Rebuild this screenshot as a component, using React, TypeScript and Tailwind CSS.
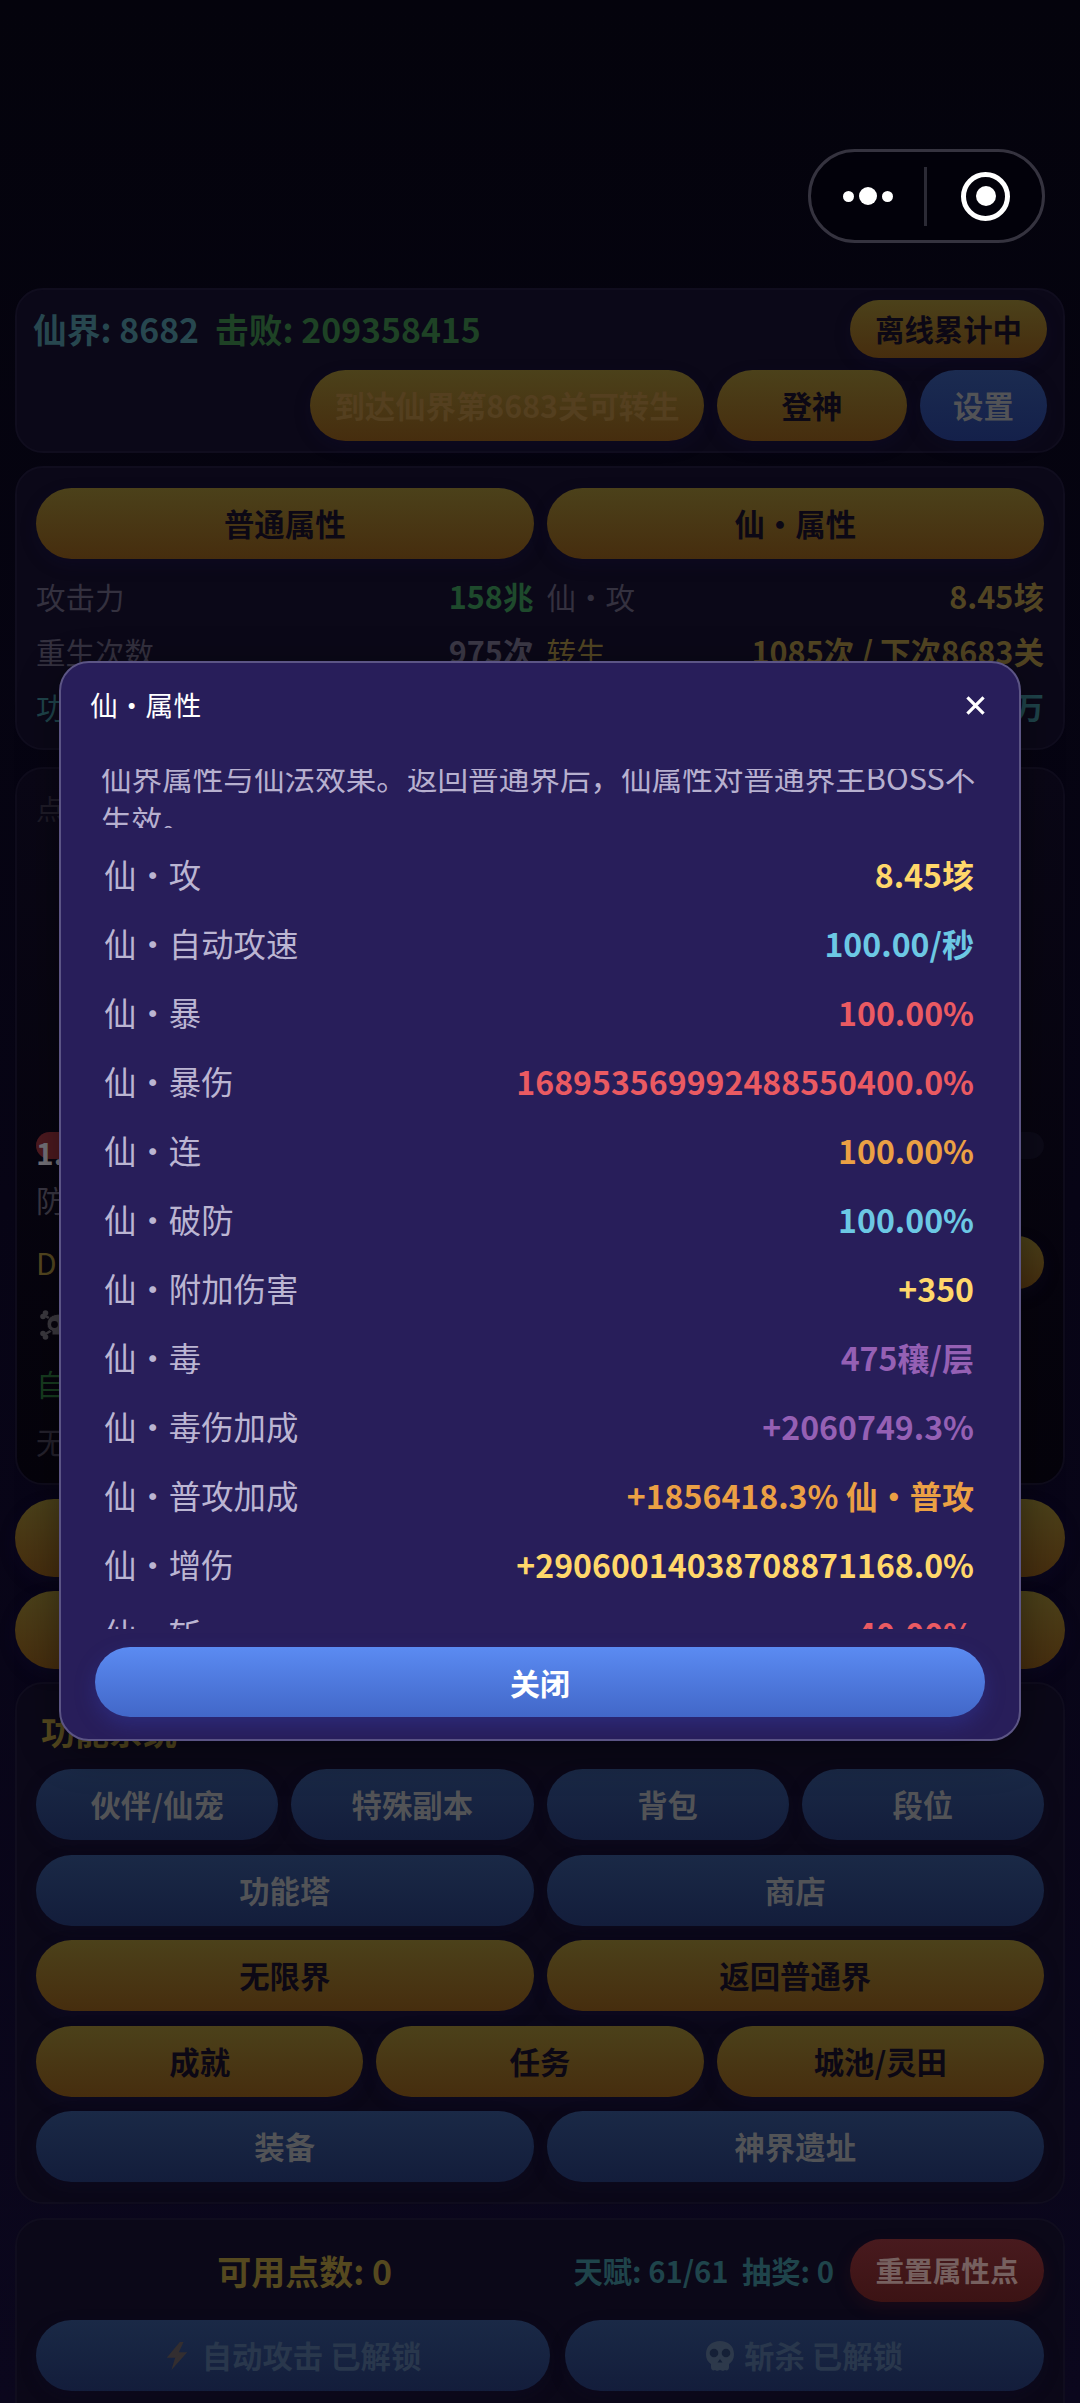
import type { ReactNode } from "react";

type Tone = "gold" | "blue";

const tones: Record<Tone, string> = {
  gold: "bg-linear-to-b from-[#4b411a] to-[#462d0e] text-[#0c0815] shadow-[0_6px_16px_rgba(18,16,56,0.25)]",
  blue: "bg-linear-to-b from-[#1a2946] to-[#131d3b] text-[#525356] shadow-[0_6px_16px_rgba(14,14,44,0.25)]",
};

function Pill({ tone, className = "", children }: { tone: Tone; className?: string; children?: ReactNode }) {
  return (
    <button className={`flex h-[71px] items-center justify-center rounded-full text-[30.4px] leading-none font-bold whitespace-pre ${tones[tone]} ${className}`}>
      {children}
    </button>
  );
}

const card = "mx-[15px] rounded-[28px] border-2 border-[#100d1e] bg-[#0b0818]";

const menuRows: { tone: Tone; cols: string; items: string[] }[] = [
  { tone: "blue", cols: "grid-cols-4", items: ["伙伴/仙宠", "特殊副本", "背包", "段位"] },
  { tone: "blue", cols: "grid-cols-2", items: ["功能塔", "商店"] },
  { tone: "gold", cols: "grid-cols-2", items: ["无限界", "返回普通界"] },
  { tone: "gold", cols: "grid-cols-3", items: ["成就", "任务", "城池/灵田"] },
  { tone: "blue", cols: "grid-cols-2", items: ["装备", "神界遗址"] },
];

const stats = [
  { label: "仙・攻", value: "8.45垓", color: "text-[#ffd76a]" },
  { label: "仙・自动攻速", value: "100.00/秒", color: "text-[#6cc8e4]" },
  { label: "仙・暴", value: "100.00%", color: "text-[#ea5a62]" },
  { label: "仙・暴伤", value: "168953569992488550400.0%", color: "text-[#ea5a62]" },
  { label: "仙・连", value: "100.00%", color: "text-[#eba044]" },
  { label: "仙・破防", value: "100.00%", color: "text-[#6cc8e4]" },
  { label: "仙・附加伤害", value: "+350", color: "text-[#ffd76a]" },
  { label: "仙・毒", value: "475穰/层", color: "text-[#9560b4]" },
  { label: "仙・毒伤加成", value: "+2060749.3%", color: "text-[#9560b4]" },
  { label: "仙・普攻加成", value: "+1856418.3% 仙・普攻", color: "text-[#eba044]" },
  { label: "仙・增伤", value: "+29060014038708871168.0%", color: "text-[#ffd76a]" },
  { label: "仙・斩", value: "40.00%", color: "text-[#ea5a62]" },
];

function Capsule() {
  return (
    <div className="mr-[35px] ml-auto flex h-[94px] w-[237px] items-center rounded-full border-3 border-[#35333f] bg-[#02010a]">
      <div className="flex flex-1 items-center justify-center gap-[5px]">
        <span className="size-[11px] rounded-full bg-white" />
        <span className="size-[18px] rounded-full bg-white" />
        <span className="size-[11px] rounded-full bg-white" />
      </div>
      <div className="h-[59px] w-[3px] bg-[#2b2a35]" />
      <div className="flex flex-1 items-center justify-center pl-[2px]">
        <div className="flex size-[49px] items-center justify-center rounded-full border-[5px] border-white">
          <span className="size-[20px] rounded-full bg-white" />
        </div>
      </div>
    </div>
  );
}

function TopCard() {
  return (
    <section className={`${card} mt-[45px] h-[165px] px-[16px] pt-[10px]`}>
      <div className="flex h-[58px] items-center text-[33.8px] leading-none font-bold">
        <span className="text-[#27474f]">仙界: 8682</span>
        <span className="ml-[16px] text-[#1e4225]">击败: 209358415</span>
        <Pill tone="gold" className="ml-auto h-[58px]! w-[197px] text-[29.4px]!">离线累计中</Pill>
      </div>
      <div className="mt-3 flex justify-end gap-[13px]">
        <Pill tone="gold" className="w-[394px] text-[#543f1f]!">到达仙界第8683关可转生</Pill>
        <Pill tone="gold" className="w-[190px]">登神</Pill>
        <Pill tone="blue" className="w-[127px] from-[#1b2b50]! to-[#14204a]!">设置</Pill>
      </div>
    </section>
  );
}

function Pair({ label, value, labelColor, valueColor }: { label: string; value: string; labelColor: string; valueColor: string }) {
  return (
    <div className="flex items-center justify-between">
      <span className={labelColor}>{label}</span>
      <span className={`text-[30.6px] font-bold ${valueColor}`}>{value}</span>
    </div>
  );
}

function AttrCard() {
  return (
    <section className={`${card} mt-[13px] h-[284px] px-[19px] pt-[20px]`}>
      <div className="grid grid-cols-2 gap-x-[13px]">
        <Pill tone="gold">普通属性</Pill>
        <Pill tone="gold">仙・属性</Pill>
      </div>
      <div className="mt-[10px] grid auto-rows-[55px] grid-cols-2 gap-x-[13px] text-[29.5px] leading-none">
        <Pair label="攻击力" value="158兆" labelColor="text-[#34313f]" valueColor="text-[#1e4a2c]" />
        <Pair label="仙・攻" value="8.45垓" labelColor="text-[#34313f]" valueColor="text-[#524522]" />
        <Pair label="重生次数" value="975次" labelColor="text-[#34313f]" valueColor="text-[#3b3846]" />
        <Pair label="转生" value="1085次 / 下次8683关" labelColor="text-[#524522]" valueColor="text-[#524522]" />
        <Pair label="功德" value="12次" labelColor="text-[#1f444b]" valueColor="text-[#1f444b]" />
        <Pair label="仙力" value="36万" labelColor="text-[#1f444b]" valueColor="text-[#1f444b]" />
      </div>
    </section>
  );
}

function BattleCard() {
  return (
    <section className="mx-[15px] mt-[17px] flex h-[718px] flex-col rounded-[28px] border-2 border-[#0f0c1c] bg-linear-to-b from-[#0a0716] to-[#05030b] px-[19px] text-[30px] leading-none">
      <div className="mt-[25px] h-[30px] text-[28px] text-[#1f1c28]">点击</div>
      <div className="mt-[308px] h-[27px] rounded-full bg-[#0c0a18]">
        <div className="h-[27px] w-[60%] rounded-full bg-[#4e1a20] pt-[5px] font-bold text-[#75737a]">1.2</div>
      </div>
      <div className="mt-[25px] text-[#3a3743]">防御</div>
      <div className="mt-[21px] flex h-[54px] items-center justify-between text-[#554820]">
        <span>DPS</span>
        <Pill tone="gold" className="h-[53px]! w-[160px]" />
      </div>
      <div className="mt-[9px] flex h-[54px] items-center pl-[4px]">
        {/* skull and crossbones */}
        <svg viewBox="0 0 40 30" className="h-[30px] w-[40px]" fill="#3c3a40">
          <path d="M4 5 L36 25 M4 25 L36 5" stroke="#3c3a40" strokeWidth="2.6" />
          <circle cx="5.5" cy="3" r="2.8" /><circle cx="3" cy="6.5" r="2.8" />
          <circle cx="5.5" cy="27" r="2.8" /><circle cx="3" cy="23.5" r="2.8" />
          <path d="M20 4c-8 0-13 4-13 10 0 4 2 6 5 7v4h16v-4c3-1 5-3 5-7 0-6-5-10-13-10z" stroke="#08050f" strokeWidth="1" />
          <circle cx="14.5" cy="14.5" r="3.4" fill="#08050f" />
          <circle cx="25.5" cy="14.5" r="3.4" fill="#08050f" />
        </svg>
      </div>
      <div className="mt-[16px] text-[#173d20]">自动</div>
      <div className="mt-[28px] text-[#25222d]">无</div>
    </section>
  );
}

function MenuCard() {
  return (
    <section className={`${card} mt-[13px] h-[522px] px-[19px] pt-[30px]`}>
      <h2 className="ml-[5px] text-[34px] leading-none font-bold text-[#55491f]">功能系统</h2>
      <div className="mt-[21px] flex flex-col gap-[14.5px]">
        {menuRows.map((row, i) => (
          <div key={i} className={`grid gap-x-[13px] ${row.cols}`}>
            {row.items.map((item) => (
              <Pill key={item} tone={row.tone}>{item}</Pill>
            ))}
          </div>
        ))}
      </div>
    </section>
  );
}

function PointsCard() {
  return (
    <section className={`${card} mt-[14px] h-[240px] px-[19px] pt-[19px]`}>
      <div className="flex h-[63px] items-center leading-none font-bold">
        <span className="flex-1 text-center text-[34px] text-[#55491f]">可用点数: 0</span>
        <span className="text-[29.3px] whitespace-pre text-[#1f444b]">天赋: 61/61  抽奖: 0</span>
        <button className="ml-[16px] h-[63px] w-[194px] rounded-full bg-linear-to-b from-[#481a1e] to-[#3c1314] text-[28.6px] font-bold text-[#76605f] shadow-[0_6px_16px_rgba(60,16,24,0.3)]">
          重置属性点
        </button>
      </div>
      <div className="mt-[18px] flex gap-[15px]">
        <Pill tone="blue" className="w-[514px] text-[#29374c]!">
          <svg viewBox="0 0 24 30" className="mr-[13px] h-[28px] w-[24px]" fill="#332e30">
            <path d="M15 0 L1 17 L10 17 L6 30 L23 11 L14 11 L19 0 Z" />
          </svg>
          自动攻击 已解锁
        </Pill>
        <Pill tone="blue" className="flex-1 text-[#29374c]!">
          <svg viewBox="0 0 28 30" className="mr-[10px] h-[30px] w-[28px]" fill="#2d394b">
            <path d="M14 0C6 0 0 5 0 13c0 5 2 8 5 10v3c0 3 2 4 4 3l2 1 3-1 3 1 2-1c2 1 4 0 4-3v-3c3-2 5-5 5-10C28 5 22 0 14 0z" />
            <circle cx="8" cy="12" r="4.3" fill="#152037" />
            <circle cx="20" cy="12" r="4.3" fill="#152037" />
            <path d="M14 18l-2.5 3.5h5z" fill="#152037" />
          </svg>
          斩杀 已解锁
        </Pill>
      </div>
    </section>
  );
}

function StatsDialog() {
  return (
    <div className="absolute inset-0 flex justify-center pt-[661px]">
      <div className="flex h-[1080px] w-[962px] flex-col rounded-[30px] border-2 border-[#5c5585] bg-[#281e5a] shadow-[0_10px_40px_rgba(0,0,0,0.4)]">
        <div className="flex h-[84px] items-center justify-between pr-[34px] pl-[29px] text-[27.8px] leading-none text-white">
          <span>仙・属性</span>
          <svg viewBox="0 0 20 20" className="size-[19px]" stroke="#fff" strokeWidth="3.4">
            <path d="M1.5 1.5 L18.5 18.5 M18.5 1.5 L1.5 18.5" />
          </svg>
        </div>
        <div className="mt-[22px] h-[59px] overflow-hidden pr-[39px] pl-[40px]">
          <p className="-mt-[13px] text-[30.6px] leading-[43px] text-[#b7b0cf]">
            仙界属性与仙法效果。返回普通界后，仙属性对普通界主BOSS不生效。
          </p>
        </div>
        <div className="h-[801px] overflow-hidden pt-[12px] pr-[45px] pl-[43px]">
          {stats.map((s) => (
            <div key={s.label} className="flex h-[69px] items-center justify-between text-[32.4px] leading-none">
              <span className="text-[#bbb5d2]">{s.label}</span>
              <span className={`text-[32.1px] font-bold ${s.color}`}>{s.value}</span>
            </div>
          ))}
        </div>
        <button className="mx-[34px] mt-[18px] h-[70px] rounded-full bg-linear-to-b from-[#5b8bf2] to-[#4267c8] text-[30px] leading-none font-bold text-white shadow-[0_8px_20px_rgba(50,60,170,0.4)]">
          关闭
        </button>
      </div>
    </div>
  );
}

export default function App() {
  return (
    <div
      lang="zh-CN"
      className="relative h-[2403px] w-[1080px] overflow-hidden bg-linear-to-b from-[#04030c] via-[#070415] to-[#0b071d] pt-[149px] font-['Noto_Sans_CJK_SC',sans-serif]"
    >
      <Capsule />
      <TopCard />
      <AttrCard />
      <BattleCard />
      <div className="mx-[15px] mt-[14px] flex flex-col gap-[14px]">
        <Pill tone="gold" className="h-[78px]!" />
        <Pill tone="gold" className="h-[78px]!" />
      </div>
      <MenuCard />
      <PointsCard />
      <StatsDialog />
    </div>
  );
}
